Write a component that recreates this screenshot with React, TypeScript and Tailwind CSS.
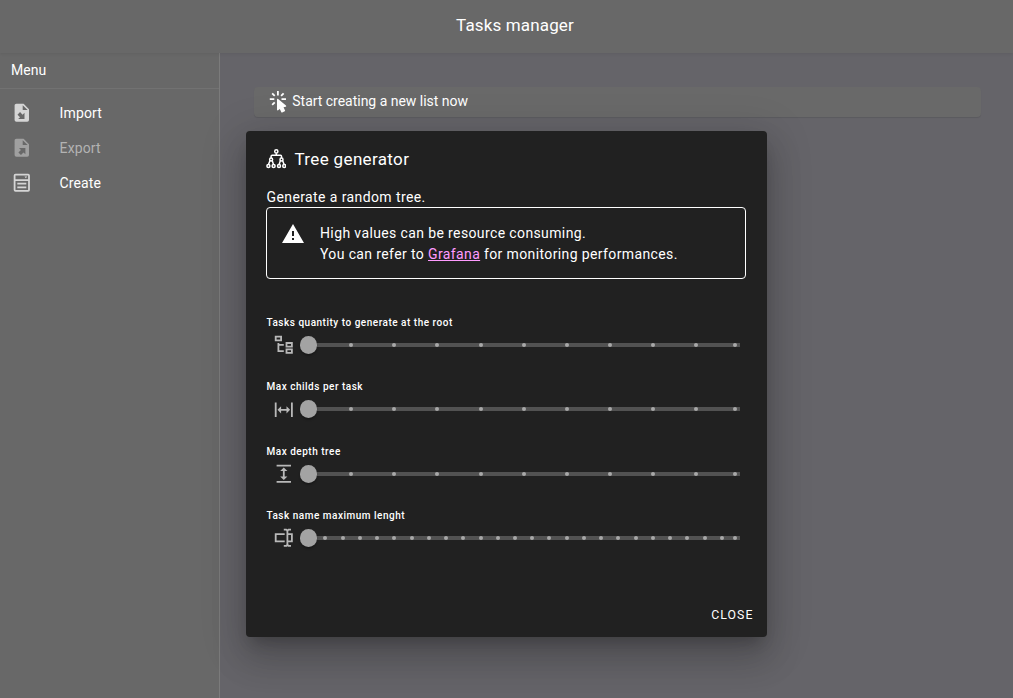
import React from "react";

const icons = {
  fileImport:
    "M14,2H6C4.89,2 4,2.9 4,4V20A2,2 0 0,0 6,22H18A2,2 0 0,0 20,20V8M13,3.5L18.5,9H13M10.05,11.22L12.88,14.05L15,11.93V19H7.93L10.05,16.88L7.22,14.05",
  fileExport:
    "M6,2C4.89,2 4,2.9 4,4V20A2,2 0 0,0 6,22H18A2,2 0 0,0 20,20V8L14,2M13,3.5L18.5,9H13M8.93,12.22H16V19.29L13.88,17.17L11.05,20L8.22,17.17L11.05,14.35",
  form: "M15,5H18L16.5,7L15,5M5,2H19A2,2 0 0,1 21,4V20A2,2 0 0,1 19,22H5A2,2 0 0,1 3,20V4A2,2 0 0,1 5,2M5,4V8H19V4H5M5,20H19V10H5V20M7,12H17V14H7V12M7,16H17V18H7V16Z",
  click:
    "M10.76,8.69A0.76,0.76 0 0,0 10,9.45V20.9C10,21.32 10.34,21.66 10.76,21.66C10.95,21.66 11.11,21.6 11.24,21.5L13.15,19.95L14.81,23.57C14.94,23.84 15.21,24 15.5,24C15.61,24 15.72,24 15.83,23.92L18.59,22.64C18.97,22.46 19.15,22 18.95,21.63L17.28,18L19.69,17.55C19.85,17.5 20,17.43 20.12,17.29C20.39,16.97 20.35,16.5 20,16.21L11.26,8.86L11.25,8.87C11.12,8.76 10.95,8.69 10.76,8.69M15,10V8H20V10H15M13.83,4.76L16.66,1.93L18.07,3.34L15.24,6.17L13.83,4.76M10,0H12V5H10V0M3.93,14.66L6.76,11.83L8.17,13.24L5.34,16.07L3.93,14.66M3.93,3.34L5.34,1.93L8.17,4.76L6.76,6.17L3.93,3.34M7,10H2V8H7V10",
  alert: "M13 14H11V9H13M13 18H11V16H13M1 21H23L12 2L1 21Z",
  fileTree:
    "M12,13H7V18H12V20H5V10H7V11H12V13M8,4V6H4V4H8M10,2H2V8H10V2M20,11V13H16V11H20M22,9H14V15H22V9M20,18V20H16V18H20M22,16H14V22H22V16Z",
  horizontal:
    "M9,11H15V8L19,12L15,16V13H9V16L5,12L9,8V11M2,20V4H4V20H2M20,20V4H22V20H20Z",
  vertical:
    "M13,9V15H16L12,19L8,15H11V9H8L12,5L16,9H13M4,2H20V4H4V2M4,20H20V22H4V20Z",
  rename:
    "M17,7H22V17H17V19A1,1 0 0,0 18,20H20V22H17.5C16.95,22 16,21.55 16,21C16,21.55 15.05,22 14.5,22H12V20H14A1,1 0 0,0 15,19V5A1,1 0 0,0 14,4H12V2H14.5C15.05,2 16,2.45 16,3C16,2.45 16.95,2 17.5,2H20V4H18A1,1 0 0,0 17,5V7M2,7H13V9H4V15H13V17H2V7M20,15V9H17V15H20Z",
};

function Icon({ d, className }: { d: string; className: string }) {
  return (
    <svg viewBox="0 0 24 24" fill="currentColor" className={`shrink-0 ${className}`}>
      <path d={d} />
    </svg>
  );
}

function TreeIcon() {
  return (
    <svg viewBox="0 0 20 20" fill="none" stroke="currentColor" strokeWidth="1.5" className="mb-px h-5 w-5 shrink-0">
      <circle cx="10.3" cy="2.4" r="1.6" />
      <path d="M10.3 4.2V6.2M5.1 9V7.2Q5.1 6.2 6.1 6.2H14.5Q15.5 6.2 15.5 7.2V9" />
      <circle cx="5.1" cy="10.4" r="1.5" />
      <circle cx="15.5" cy="10.4" r="1.5" />
      <path d="M4 11.6L2.6 15.2M6.2 11.6L7.4 15.2M14.4 11.6L13.2 15.2M16.6 11.6L18 15.2" />
      <circle cx="2.4" cy="16.9" r="1.5" />
      <circle cx="7.6" cy="16.9" r="1.5" />
      <circle cx="13" cy="16.9" r="1.5" />
      <circle cx="18.2" cy="16.9" r="1.5" />
    </svg>
  );
}

function Slider({ label, icon, steps }: { label: string; icon: string; steps: number }) {
  const width = 431;
  const ticks = Array.from({ length: steps }, (_, i) =>
    i === steps - 1 ? width - 7 : Math.round(((i + 1) * width) / steps - 2.9),
  );
  return (
    <div className="h-[64.4px]">
      <div className="h-[13px] pl-[0.5px] text-[10px] leading-[13px] font-medium tracking-[0.51px] whitespace-nowrap">
        {label}
      </div>
      <div className="flex h-8 items-center pl-[6.5px] text-[#b9b9b9]">
        <Icon d={icon} className="h-[21.6px] w-[21.6px]" />
        <div className="relative ml-[14.9px] h-1 w-[431px] bg-[#525252]">
          {ticks.map((x) => (
            <span key={x} className="absolute top-0 h-1 w-1 rounded-full bg-[#a8a8a8]" style={{ left: x }} />
          ))}
          <span className="absolute -top-[7px] -left-[9.3px] h-[18px] w-[17.5px] rounded-full bg-[#a3a3a3] shadow-[0_2px_2px_rgba(0,0,0,0.25)]" />
        </div>
      </div>
    </div>
  );
}

function MenuItem({ label, icon, disabled }: { label: string; icon: string; disabled?: boolean }) {
  return (
    <div className="flex h-[35px] items-center pl-[10.5px]">
      <Icon d={icon} className={`mb-px h-[21.6px] w-[21.6px] ${disabled ? "text-[#a0a0a0]" : "text-[#d5d5d5]"}`} />
      <span
        className={`mb-[1.5px] ml-[27.5px] text-[14px] leading-5 tracking-[0.12px] ${disabled ? "text-[#b3b3b3]" : "text-white"}`}
      >
        {label}
      </span>
    </div>
  );
}

export default function App() {
  return (
    <div className="relative flex h-[698px] w-[1013px] flex-col overflow-hidden bg-[#656469] font-['Roboto',sans-serif] text-white">
      <header className="z-10 flex h-[53px] shrink-0 items-center justify-center bg-[#686868] pb-px pl-[17px] text-[17px] tracking-[0.15px] shadow-[0_1px_3px_rgba(0,0,0,0.08)]">
        Tasks manager
      </header>
      <div className="flex min-h-0 flex-1">
        <nav className="w-[220px] shrink-0 border-r border-[#7b7b7b] bg-[#686868]">
          <div className="h-9 border-b border-[#727272] pl-[11px] text-[14px] leading-[35px]">Menu</div>
          <div className="pt-[7px]">
            <MenuItem label="Import" icon={icons.fileImport} />
            <MenuItem label="Export" icon={icons.fileExport} disabled />
            <MenuItem label="Create" icon={icons.form} />
          </div>
        </nav>
        <main className="flex-1 pt-[34px] pl-[34px]">
          <div className="flex h-[30px] w-[727px] items-center rounded bg-[#696969] pl-[14px] shadow-[0_1px_1px_rgba(0,0,0,0.1)]">
            <Icon d={icons.click} className="h-[21.6px] w-[21.6px]" />
            <span className="mb-[2px] ml-[2.7px] text-[14px] leading-5 tracking-[-0.02px]">
              Start creating a new list now
            </span>
          </div>
        </main>
      </div>
      <section
        role="dialog"
        className="absolute top-[131px] left-[246px] z-20 flex h-[506px] w-[521px] flex-col rounded-[4px] bg-[#212121] px-5 shadow-[0_10px_13.5px_-6.3px_rgba(0,0,0,0.2),0_21.6px_34.2px_2.7px_rgba(0,0,0,0.14),0_8.1px_41.4px_7.2px_rgba(0,0,0,0.12)]"
      >
        <div className="mt-[15px] flex h-[26px] items-center gap-[8.5px] text-[17px] tracking-[0.35px]">
          <TreeIcon />
          <h2 className="leading-[26px]">Tree generator</h2>
        </div>
        <p className="mt-[15px] h-5 pl-[0.5px] text-[14px] leading-5 tracking-[0.4px]">Generate a random tree.</p>
        <div className="flex h-[72px] w-[480px] rounded-[4px] border border-white pt-[14px] pl-[14px]">
          <Icon d={icons.alert} className="h-6 w-6" />
          <p className="mt-px ml-[15px] text-[14px] leading-[21px] tracking-[0.38px]">
            High values can be resource consuming.
            <br />
            You can refer to <a className="text-[#ff9bff] underline">Grafana</a> for monitoring performances.
          </p>
        </div>
        <div className="mt-[37px]">
          <Slider label="Tasks quantity to generate at the root" icon={icons.fileTree} steps={10} />
          <Slider label="Max childs per task" icon={icons.horizontal} steps={10} />
          <Slider label="Max depth tree" icon={icons.vertical} steps={10} />
          <Slider label="Task name maximum lenght" icon={icons.rename} steps={25} />
        </div>
        <button className="mt-auto mb-3 -mr-[6.5px] self-end text-[12.3px] leading-5 tracking-[1.05px]">CLOSE</button>
      </section>
    </div>
  );
}
